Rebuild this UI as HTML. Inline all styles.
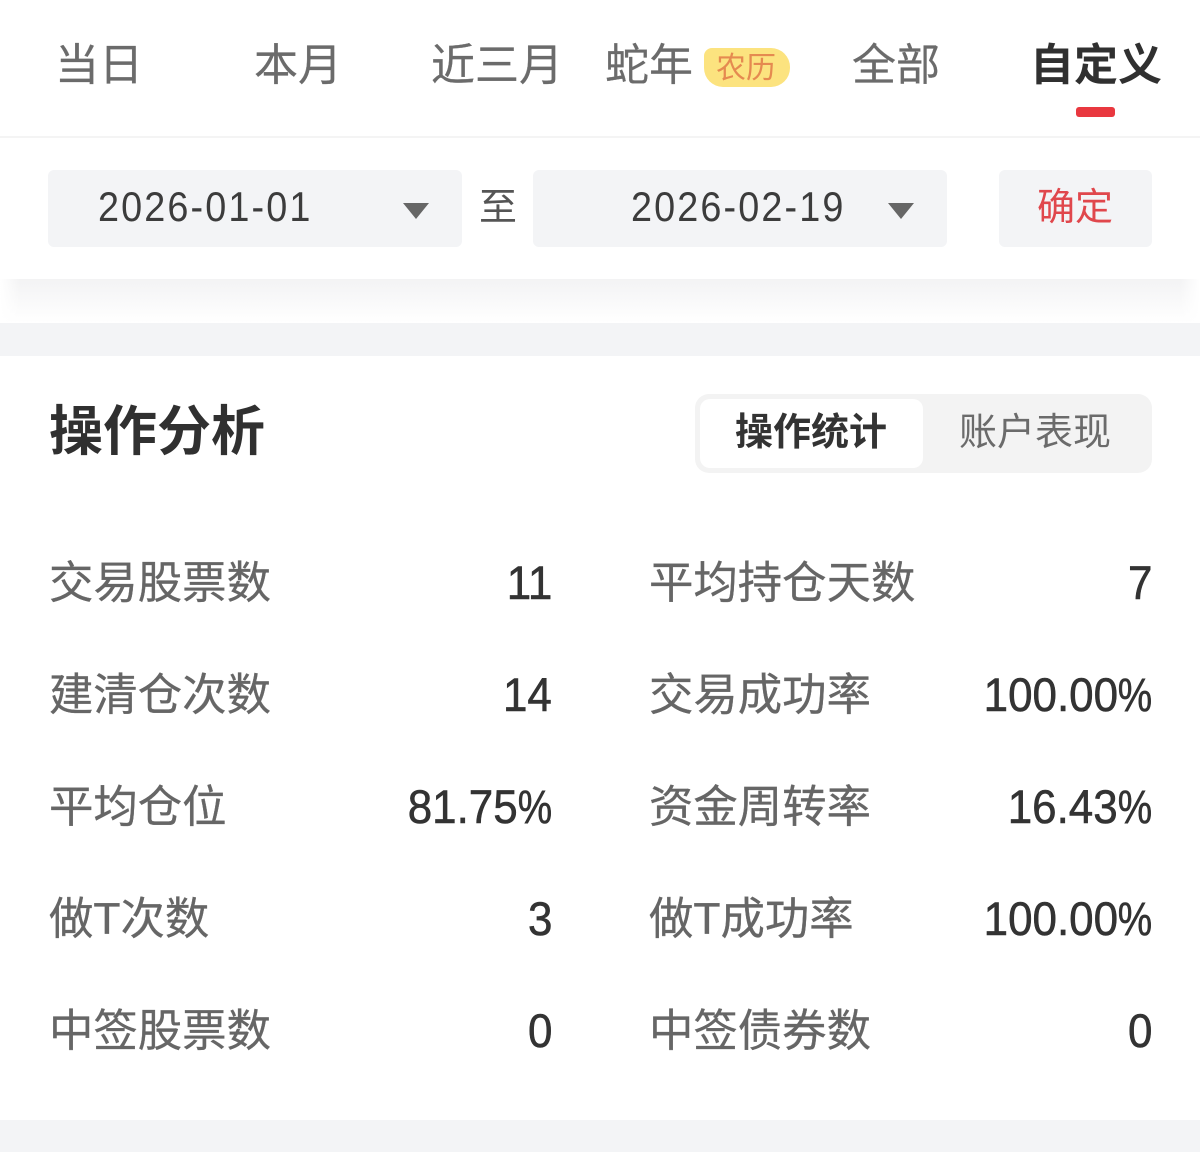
<!DOCTYPE html>
<html lang="zh">
<head>
<meta charset="utf-8">
<title>操作分析</title>
<style>
html,body{margin:0;padding:0;background:#fff}
body{position:relative;width:1200px;height:1157px;overflow:hidden;font-family:"Liberation Sans","Noto Sans CJK SC",sans-serif;color:#666}
div,span{position:absolute;white-space:nowrap;display:block}
.tab{top:36px;font-size:44px;line-height:60px;color:#6b6b6b;-webkit-text-stroke:.25px #6b6b6b}
.l{left:0;font-size:44.4px;line-height:60px;color:#666;-webkit-text-stroke:.3px #666}
.c1{left:49px}
.c2{left:649px}
.v{font-size:47.5px;line-height:60px;color:#333;-webkit-text-stroke:.6px #333;transform:scaleX(.925);transform-origin:right center;text-align:right}
.v i{font-style:normal;display:inline-block;width:37px;transform:scaleX(.88);transform-origin:left center}
.v1{right:648px}
.v2{right:48px}
.r1{top:554px}
.r2{top:666px}
.r3{top:778px}
.r4{top:890px}
.r5{top:1002px}
.n1{top:554px}
.n2{top:666px}
.n3{top:778px}
.n4{top:890px}
.n5{top:1002px}
.date{height:77px;width:414px;top:170px;background:#f3f4f6;border-radius:6px}
.dt{top:177px;font-size:42px;line-height:60px;color:#3c3c3c;letter-spacing:2.35px;transform:scaleX(.9);transform-origin:left center}
.tri{top:203px;width:0;height:0;border-left:13px solid transparent;border-right:13px solid transparent;border-top:16px solid #666}
</style>
</head>
<body>
<div class="tab" style="left:55px">当日</div>
<div class="tab" style="left:254px">本月</div>
<div class="tab" style="left:431px">近三月</div>
<div class="tab" style="left:605px">蛇年</div>
<div style="left:704px;top:48px;width:86px;height:39px;background:#fce37f;border-radius:8px 19px 19px 19px"></div>
<div style="left:716px;top:50px;font-size:30px;line-height:38px;color:#e58a50">农历</div>
<div class="tab" style="left:852px">全部</div>
<div class="tab" style="left:1030px;color:#303030;-webkit-text-stroke:0;font-weight:700">自定义</div>
<div style="left:1076px;top:107px;width:39px;height:10px;background:#e9383f;border-radius:3px"></div>
<div style="left:0;top:136px;width:1200px;height:2px;background:#f4f4f4"></div>

<div class="date" style="left:48px"></div>
<div class="dt" style="left:98px">2026-01-01</div>
<div class="tri" style="left:403px"></div>
<div style="left:479px;top:178px;font-size:38px;line-height:60px;color:#555">至</div>
<div class="date" style="left:533px"></div>
<div class="dt" style="left:631px">2026-02-19</div>
<div class="tri" style="left:888px"></div>
<div style="left:999px;top:170px;width:153px;height:77px;background:#f3f4f6;border-radius:6px"></div>
<div style="left:1037px;top:178px;font-size:38px;line-height:60px;color:#e0474c">确定</div>

<div style="left:0;top:279px;width:1200px;height:44px;background:linear-gradient(#f3f3f4,#fff)"></div>
<div style="left:0;top:279px;width:20px;height:44px;background:linear-gradient(90deg,#fff,rgba(255,255,255,0))"></div>
<div style="left:1180px;top:279px;width:20px;height:44px;background:linear-gradient(270deg,#fff,rgba(255,255,255,0))"></div>
<div style="left:0;top:323px;width:1200px;height:33px;background:#f3f4f6"></div>

<div style="left:49px;top:397px;font-size:54px;line-height:70px;font-weight:700;color:#303030">操作分析</div>
<div style="left:695px;top:394px;width:457px;height:79px;background:#f3f3f3;border-radius:14px"></div>
<div style="left:700px;top:399px;width:223px;height:69px;background:#fff;border-radius:10px"></div>
<div style="left:735px;top:403px;font-size:38px;line-height:60px;font-weight:700;color:#333">操作统计</div>
<div style="left:959px;top:403px;font-size:38px;line-height:60px;color:#6b6b6b">账户表现</div>

<div class="l c1 r1">交易股票数</div><div class="v v1 n1">11</div>
<div class="l c2 r1">平均持仓天数</div><div class="v v2 n1">7</div>
<div class="l c1 r2">建清仓次数</div><div class="v v1 n2">14</div>
<div class="l c2 r2">交易成功率</div><div class="v v2 n2">100.00<i>%</i></div>
<div class="l c1 r3">平均仓位</div><div class="v v1 n3">81.75<i>%</i></div>
<div class="l c2 r3">资金周转率</div><div class="v v2 n3">16.43<i>%</i></div>
<div class="l c1 r4">做T次数</div><div class="v v1 n4">3</div>
<div class="l c2 r4">做T成功率</div><div class="v v2 n4">100.00<i>%</i></div>
<div class="l c1 r5">中签股票数</div><div class="v v1 n5">0</div>
<div class="l c2 r5">中签债券数</div><div class="v v2 n5">0</div>

<div style="left:0;top:1120px;width:1200px;height:32px;background:#f3f4f6"></div>
</body>
</html>
